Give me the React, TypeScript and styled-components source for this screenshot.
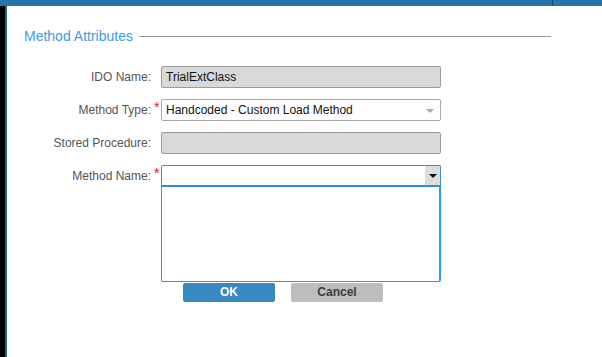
import styled, { createGlobalStyle } from "styled-components";

const GlobalStyle = createGlobalStyle`
  html, body {
    margin: 0;
    padding: 0;
    background: #ffffff;
  }
  body {
    font-family: "Liberation Sans", Arial, sans-serif;
  }
`;

type RowProps = {
  label: string;
  required?: boolean;
  children: React.ReactNode;
};

const FieldRow = (props: RowProps) => {
  return (
    <>
      <Label>{props.label}</Label>
      <Star>{props.required ? "*" : ""}</Star>
      <Field>{props.children}</Field>
    </>
  );
};

const App = () => {
  return (
    <Page>
      <GlobalStyle />
      <TopBar>
        <TopSegment />
        <TopDivider />
        <TopRest />
      </TopBar>
      <Body>
        <LeftStrip />
        <Content>
          <Legend>
            <LegendText>Method Attributes</LegendText>
            <LegendLine />
          </Legend>
          <Form>
            <FieldRow label="IDO Name:">
              <ReadOnlyInput>TrialExtClass</ReadOnlyInput>
            </FieldRow>
            <FieldRow label="Method Type:" required>
              <Select>
                <span>Handcoded - Custom Load Method</span>
                <SmallArrow />
              </Select>
            </FieldRow>
            <FieldRow label="Stored Procedure:">
              <ReadOnlyInput />
            </FieldRow>
            <FieldRow label="Method Name:" required>
              <Combo>
                <ComboHead>
                  <ComboText />
                  <ComboButton>
                    <BlackArrow />
                  </ComboButton>
                </ComboHead>
                <ComboList />
              </Combo>
            </FieldRow>
          </Form>
          <Buttons>
            <Button primary>OK</Button>
            <Button>Cancel</Button>
          </Buttons>
        </Content>
      </Body>
    </Page>
  );
};

export default App;

const Page = styled.div`
  width: 602px;
  height: 357px;
  display: flex;
  flex-direction: column;
  overflow: hidden;
  background: #ffffff;
`;

const TopBar = styled.div`
  display: flex;
  height: 6px;
  flex-shrink: 0;
`;

const TopSegment = styled.div`
  width: 552px;
  background: #2675a8;
`;

const TopDivider = styled.div`
  width: 1px;
  background: #17486b;
`;

const TopRest = styled.div`
  flex: 1;
  background: #2675a8;
`;

const Body = styled.div`
  flex: 1;
  display: flex;
`;

const LeftStrip = styled.div`
  width: 5px;
  background: #000000;
  border-right: 2px solid #23628f;
`;

const Content = styled.div`
  flex: 1;
  padding: 22px 0 0 17px;
`;

const Legend = styled.div`
  display: flex;
  align-items: center;
  width: 527px;
  height: 16px;
`;

const LegendText = styled.div`
  color: #3c9cea;
  font-size: 14px;
  line-height: 16px;
  white-space: nowrap;
`;

const LegendLine = styled.div`
  flex: 1;
  height: 1px;
  background: #9a9a9a;
  margin-left: 6px;
`;

const Form = styled.div`
  display: grid;
  grid-template-columns: 127px 10px 280px;
  grid-auto-rows: minmax(22px, auto);
  row-gap: 11px;
  margin-top: 22px;
`;

const Label = styled.div`
  color: #555555;
  font-size: 12px;
  line-height: 22px;
  text-align: right;
  white-space: nowrap;
`;

const Star = styled.div`
  color: #e3151a;
  font-size: 14px;
  line-height: 14px;
  padding-left: 3px;
  margin-top: 1px;
`;

const Field = styled.div`
  align-self: start;
`;

const ReadOnlyInput = styled.div`
  box-sizing: border-box;
  height: 22px;
  background: #d9d9d9;
  border: 1px solid #9c9c9c;
  border-radius: 2px;
  padding: 0 4px;
  font-size: 12px;
  line-height: 20px;
  color: #111111;
`;

const Select = styled.div`
  box-sizing: border-box;
  height: 22px;
  display: flex;
  align-items: center;
  justify-content: space-between;
  background: #ffffff;
  border: 1px solid #a8a8a8;
  border-radius: 2px;
  padding: 0 6px 0 4px;
  font-size: 12px;
  color: #111111;
`;

const SmallArrow = styled.div`
  width: 0;
  height: 0;
  border-left: 4px solid transparent;
  border-right: 4px solid transparent;
  border-top: 4px solid #a9a9a9;
  margin-top: 2px;
`;

const Combo = styled.div`
  display: flex;
  flex-direction: column;
`;

const ComboHead = styled.div`
  box-sizing: border-box;
  height: 22px;
  display: flex;
  border: 1px solid #3b8ec8;
  border-bottom: 2px solid #2a90d0;
  border-radius: 2px 2px 0 0;
`;

const ComboText = styled.div`
  flex: 1;
`;

const ComboButton = styled.div`
  width: 15px;
  display: flex;
  align-items: center;
  justify-content: center;
  background: #dddddd;
`;

const BlackArrow = styled.div`
  width: 0;
  height: 0;
  border-left: 4px solid transparent;
  border-right: 4px solid transparent;
  border-top: 4px solid #111111;
`;

const ComboList = styled.div`
  box-sizing: border-box;
  height: 95px;
  background: #ffffff;
  border: 1px solid #3a93cf;
  border-top: none;
  border-right: 2px solid #1aa3f2;
  border-radius: 0 0 2px 2px;
`;

const Buttons = styled.div`
  display: flex;
  gap: 16px;
  margin: 1px 0 0 159px;
`;

const Button = styled.div<{ primary?: boolean }>`
  box-sizing: border-box;
  width: 92px;
  height: 19px;
  border-radius: 2px;
  background: ${(props) => (props.primary ? "#3789c2" : "#bdbdbd")};
  color: ${(props) => (props.primary ? "#ffffff" : "#3c3c3c")};
  font-size: 12px;
  font-weight: 700;
  line-height: 19px;
  text-align: center;
`;
